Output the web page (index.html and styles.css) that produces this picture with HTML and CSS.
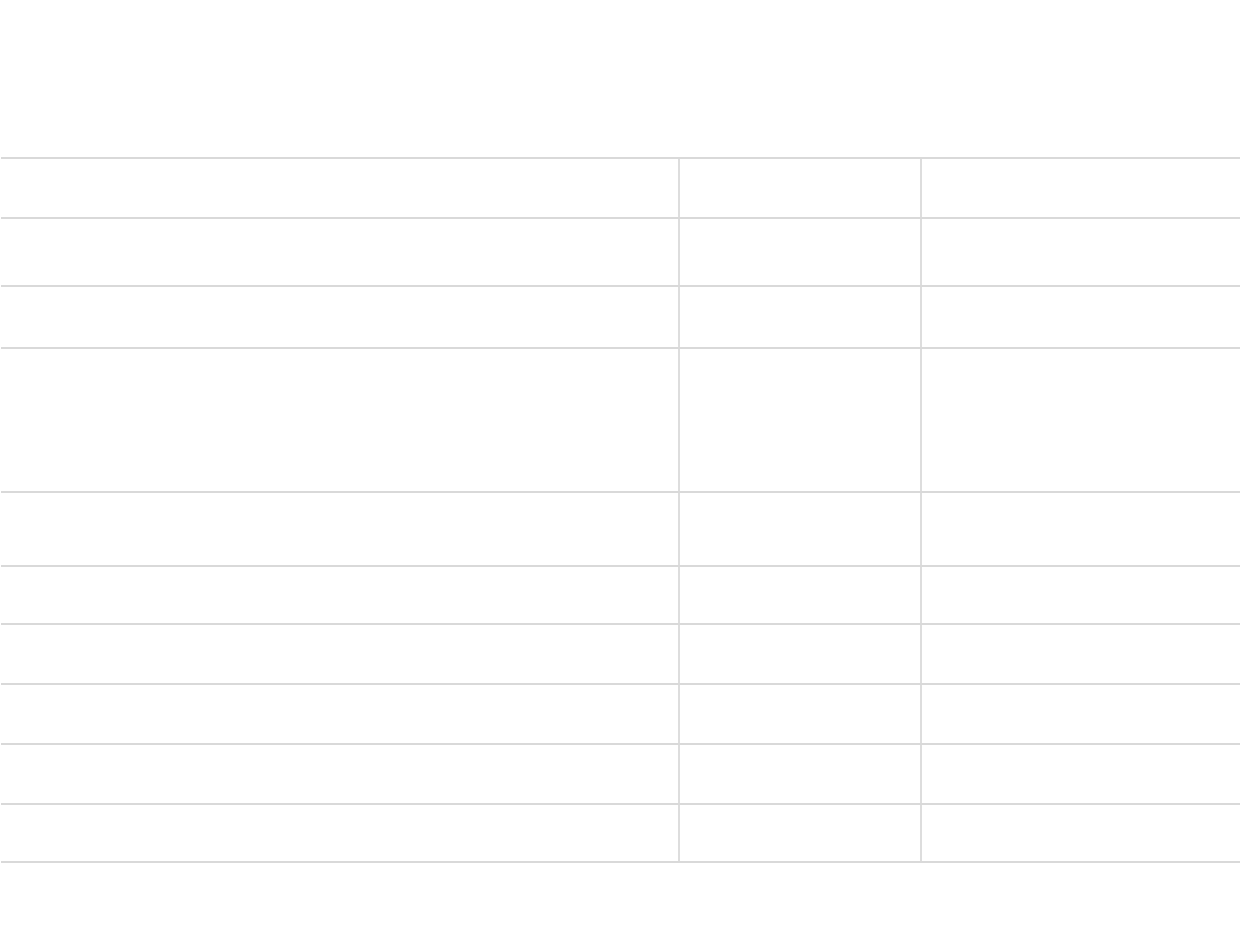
FILE: index.html
```html
<!DOCTYPE html>
<html lang="en">
<head>
<meta charset="utf-8">
<title>Table</title>
<link rel="stylesheet" href="styles.css">
</head>
<body>
<div class="page">
  <div class="grid">
    <div class="row h60"><div class="cell c1"></div><div class="cell c2"></div><div class="cell c3"></div></div>
    <div class="row h68"><div class="cell c1"></div><div class="cell c2"></div><div class="cell c3"></div></div>
    <div class="row h62"><div class="cell c1"></div><div class="cell c2"></div><div class="cell c3"></div></div>
    <div class="row h144"><div class="cell c1"></div><div class="cell c2"></div><div class="cell c3"></div></div>
    <div class="row h74"><div class="cell c1"></div><div class="cell c2"></div><div class="cell c3"></div></div>
    <div class="row h58"><div class="cell c1"></div><div class="cell c2"></div><div class="cell c3"></div></div>
    <div class="row h60"><div class="cell c1"></div><div class="cell c2"></div><div class="cell c3"></div></div>
    <div class="row h60"><div class="cell c1"></div><div class="cell c2"></div><div class="cell c3"></div></div>
    <div class="row h60"><div class="cell c1"></div><div class="cell c2"></div><div class="cell c3"></div></div>
    <div class="row h58 last"><div class="cell c1"></div><div class="cell c2"></div><div class="cell c3"></div></div>
  </div>
</div>
</body>
</html>
```
FILE: styles.css
```css
html, body {
  margin: 0;
  padding: 0;
  background: #ffffff;
  font-family: "Liberation Sans", Arial, sans-serif;
}
.page {
  padding-top: 157px;
  padding-left: 1px;
  overflow: hidden;
}
.grid {
  display: flex;
  flex-direction: column;
  width: 1239px;
}
.row {
  display: grid;
  grid-template-columns: 677px 242px 1fr;
  border-top: 2px solid #d9d9d9;
  box-sizing: border-box;
}
.row.last {
  border-bottom: 2px solid #d9d9d9;
}
.h58 { height: 58px; }
.h60 { height: 60px; }
.h62 { height: 62px; }
.h68 { height: 68px; }
.h74 { height: 74px; }
.h144 { height: 144px; }
.row.last.h58 { height: 60px; }
.cell { min-width: 0; }
.c2, .c3 { border-left: 2px solid #dddddd; }
```
